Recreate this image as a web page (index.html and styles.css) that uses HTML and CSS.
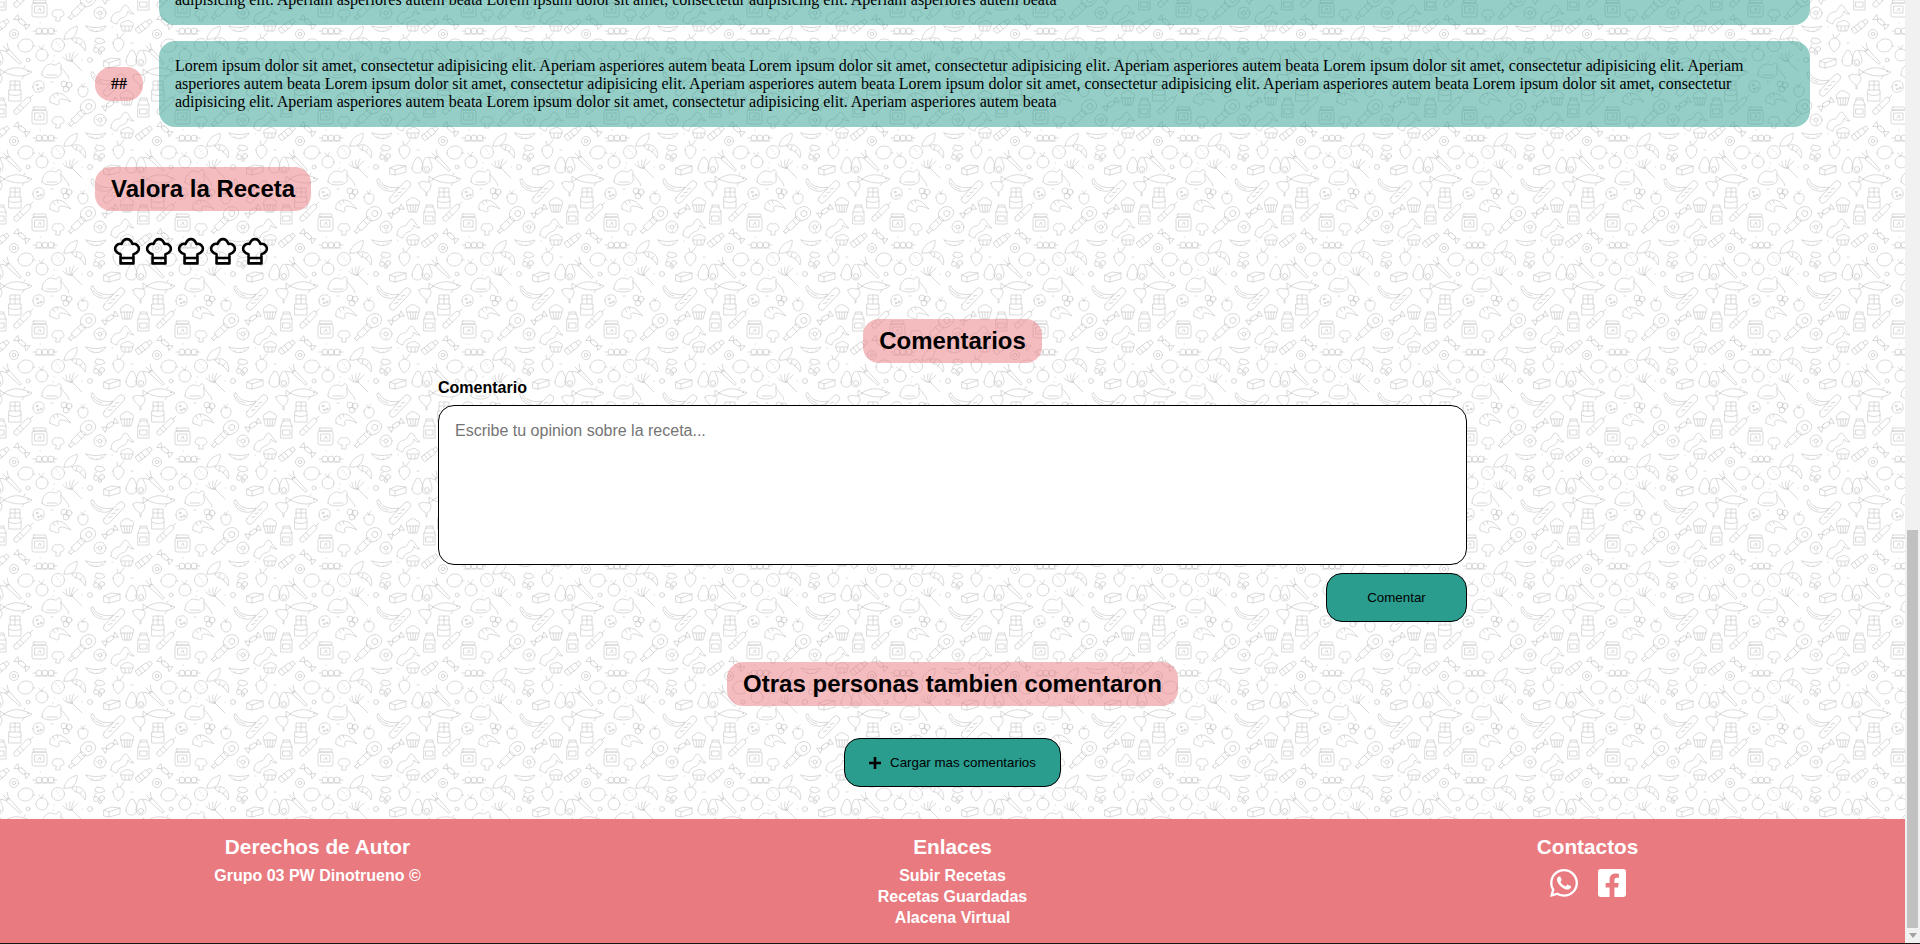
FILE: index.html
```html
<!DOCTYPE html>
<html lang="es">
<head>
    <meta charset="UTF-8">
    <meta name="viewport" content="width=device-width, initial-scale=1.0">
    <title>Receta</title>
    <link rel="stylesheet" href="styles.css">
</head>
<body>
    <div class="window">
        <div class="page">
            <main class="content">
                <section class="recipe">
                    <div class="steps">
                        <div class="step">
                            <span class="step-number">##</span>
                            <p class="step-text">Lorem ipsum dolor sit amet, consectetur adipisicing elit. Aperiam asperiores autem beata Lorem ipsum dolor sit amet, consectetur adipisicing elit. Aperiam asperiores autem beata Lorem ipsum dolor sit amet, consectetur adipisicing elit. Aperiam asperiores autem beata Lorem ipsum dolor sit amet, consectetur adipisicing elit. Aperiam asperiores autem beata Lorem ipsum dolor sit amet, consectetur adipisicing elit. Aperiam asperiores autem beata Lorem ipsum dolor sit amet, consectetur adipisicing elit. Aperiam asperiores autem beata Lorem ipsum dolor sit amet, consectetur adipisicing elit. Aperiam asperiores autem beata</p>
                        </div>
                        <div class="step">
                            <span class="step-number">##</span>
                            <p class="step-text">Lorem ipsum dolor sit amet, consectetur adipisicing elit. Aperiam asperiores autem beata Lorem ipsum dolor sit amet, consectetur adipisicing elit. Aperiam asperiores autem beata Lorem ipsum dolor sit amet, consectetur adipisicing elit. Aperiam asperiores autem beata Lorem ipsum dolor sit amet, consectetur adipisicing elit. Aperiam asperiores autem beata Lorem ipsum dolor sit amet, consectetur adipisicing elit. Aperiam asperiores autem beata Lorem ipsum dolor sit amet, consectetur adipisicing elit. Aperiam asperiores autem beata Lorem ipsum dolor sit amet, consectetur adipisicing elit. Aperiam asperiores autem beata</p>
                        </div>
                    </div>

                    <h2 class="pill rate-title">Valora la Receta</h2>
                    <div class="hats">
                        <svg class="hat" viewBox="0 0 26 26"><path d="M7 16C3 15 1.3 12 2.3 9.3 3.3 6.8 5.8 5.8 8 6.4 9 3.4 11 2 13 2s4 1.4 5 4.4c2.2-.6 4.7.4 5.7 2.900 1 2.7-.7 5.7-4.7 6.7v8.5H7zM7 19.500h12"/></svg>
                        <svg class="hat" viewBox="0 0 26 26"><path d="M7 16C3 15 1.3 12 2.3 9.3 3.3 6.8 5.8 5.8 8 6.4 9 3.4 11 2 13 2s4 1.4 5 4.4c2.2-.6 4.7.4 5.7 2.900 1 2.7-.7 5.7-4.7 6.7v8.5H7zM7 19.500h12"/></svg>
                        <svg class="hat" viewBox="0 0 26 26"><path d="M7 16C3 15 1.3 12 2.3 9.3 3.3 6.8 5.8 5.8 8 6.4 9 3.4 11 2 13 2s4 1.4 5 4.4c2.2-.6 4.7.4 5.7 2.900 1 2.7-.7 5.7-4.7 6.7v8.5H7zM7 19.500h12"/></svg>
                        <svg class="hat" viewBox="0 0 26 26"><path d="M7 16C3 15 1.3 12 2.3 9.3 3.3 6.8 5.8 5.8 8 6.4 9 3.4 11 2 13 2s4 1.4 5 4.4c2.2-.6 4.7.4 5.7 2.900 1 2.7-.7 5.7-4.7 6.7v8.5H7zM7 19.500h12"/></svg>
                        <svg class="hat" viewBox="0 0 26 26"><path d="M7 16C3 15 1.3 12 2.3 9.3 3.3 6.8 5.8 5.8 8 6.4 9 3.4 11 2 13 2s4 1.4 5 4.4c2.2-.6 4.7.4 5.7 2.900 1 2.7-.7 5.7-4.7 6.7v8.5H7zM7 19.500h12"/></svg>
                    </div>
                </section>

                <section class="comments">
                    <h2 class="pill">Comentarios</h2>
                    <form class="comment-form">
                        <label class="comment-label" for="comentario">Comentario</label>
                        <textarea class="comment-input" id="comentario" placeholder="Escribe tu opinion sobre la receta..."></textarea>
                        <button class="btn btn-send" type="button">Comentar</button>
                    </form>
                    <h2 class="pill others-title">Otras personas tambien comentaron</h2>
                    <button class="btn btn-more" type="button">
                        <svg class="plus" viewBox="0 0 12 12"><path d="M4.7 0h2.600v4.7H12v2.600H7.3V12H4.7V7.3H0V4.7h4.7z"/></svg>
                        Cargar mas comentarios
                    </button>
                </section>
            </main>

            <footer class="footer">
                <div class="footer-col">
                    <h3>Derechos de Autor</h3>
                    <a href="#">Grupo 03 PW Dinotrueno ©</a>
                </div>
                <div class="footer-col">
                    <h3>Enlaces</h3>
                    <a href="#">Subir Recetas</a>
                    <a href="#">Recetas Guardadas</a>
                    <a href="#">Alacena Virtual</a>
                </div>
                <div class="footer-col">
                    <h3>Contactos</h3>
                    <div class="socials">
                        <svg class="social" viewBox="0 32 448 448"><path d="M380.9 97.1C339 55.1 283.2 32 223.9 32c-122.4 0-222 99.6-222 222 0 39.1 10.2 77.3 29.6 111L0 480l117.7-30.9c32.4 17.7 68.9 27 106.1 27h.1c122.3 0 224.1-99.6 224.1-222 0-59.3-25.2-115-67.1-157zm-157 341.6c-33.2 0-65.7-8.9-94-25.7l-6.7-4-69.8 18.3L72 359.2l-4.4-7c-18.5-29.4-28.2-63.3-28.2-98.2 0-101.7 82.8-184.5 184.6-184.5 49.3 0 95.6 19.2 130.4 54.1 34.8 34.9 56.2 81.2 56.1 130.5 0 101.8-84.9 184.6-186.6 184.6zm101.2-138.2c-5.5-2.8-32.8-16.2-37.9-18-5.1-1.9-8.8-2.8-12.5 2.8-3.7 5.6-14.3 18-17.6 21.8-3.2 3.7-6.5 4.2-12 1.4-32.6-16.3-54-29.1-75.5-66-5.7-9.8 5.7-9.1 16.3-30.3 1.8-3.7.9-6.9-.5-9.7-1.4-2.8-12.5-30.1-17.1-41.2-4.5-10.8-9.1-9.3-12.5-9.5-3.2-.2-6.9-.2-10.6-.2-3.7 0-9.7 1.4-14.8 6.9-5.1 5.6-19.4 19-19.4 46.3 0 27.3 19.9 53.7 22.6 57.4 2.8 3.7 39.1 59.7 94.8 83.8 35.2 15.2 49 16.5 66.6 13.9 10.7-1.6 32.8-13.4 37.4-26.4 4.6-13 4.6-24.1 3.2-26.4-1.3-2.5-5-3.9-10.5-6.6z"/></svg>
                        <svg class="social" viewBox="0 32 448 448"><path d="M400 32H48A48 48 0 0 0 0 80v352a48 48 0 0 0 48 48h137.25V327.69h-63V256h63v-54.64c0-62.15 37-96.48 93.67-96.48 27.14 0 55.52 4.84 55.52 4.84v61h-31.27c-30.81 0-40.42 19.12-40.42 38.73V256h68.78l-11 71.69h-57.78V480H400a48 48 0 0 0 48-48V80a48 48 0 0 0-48-48z"/></svg>
                    </div>
                </div>
            </footer>
        </div>

        <div class="scrollbar">
            <span class="scroll-up"></span>
            <span class="scroll-thumb"></span>
            <span class="scroll-down"></span>
        </div>
    </div>
    <div class="edge"></div>
</body>
</html>
```

FILE: styles.css
```css
* {
    box-sizing: border-box;
}
html, body {
    height: 100%;
}
body {
    margin: 0;
    display: flex;
    flex-direction: column;
    overflow: hidden;
    font-family: "Liberation Sans", Arial, sans-serif;
    color: #000;
    background-color: #fff;
}
.window {
    display: flex;
    height: 943px;
}
.edge {
    height: 1px;
    background-color: #1c1414;
}
.page {
    flex: 1;
    display: flex;
    flex-direction: column;
    overflow: hidden;
}

/* food doodles, one 143x107 tile */
.content {
    flex: 1;
    background-color: #fff;
    background-position: 0 86px;
    background-size: 143px 107px;
    background-image: url("data:image/svg+xml,<svg xmlns='http://www.w3.org/2000/svg' xmlns:xlink='http://www.w3.org/1999/xlink' width='143' height='107' viewBox='0 0 143 107'><defs><g id='t' fill='none' stroke='rgb(198,198,198)' stroke-width='.65' stroke-linecap='round' stroke-linejoin='round'><g transform='translate(23 19) rotate(-45)'><rect x='-12' y='-2.5' width='22' height='5' rx='2.5'/><path d='M10 0h4M-6-2.5v5M-2-2.5v5'/></g><g transform='translate(39 30)'><rect x='-7' y='-6' width='15' height='14' rx='2'/><rect x='-6' y='-9' width='13' height='3' rx='1'/><rect x='-4' y='-3' width='9' height='7'/><path d='M-1 2l2-3 1 3'/></g><g transform='translate(76 33) rotate(-45)'><rect x='-4' y='-3' width='15' height='6' rx='1'/><path d='M-4-1.5h-5v3h5M5-3v6M-9-2v4'/></g><g transform='translate(59 37)'><path d='M-3 1c-4 0-5-3-3-5 0-2 3-3 5-2 2-1 5 0 5 2 2 2 1 5-3 5v4h-4z'/></g><g transform='translate(60 13)'><path d='M-10 3c-2-7 6-11 12-8 3 1 6 5 9 8-4-2-7-3-10-3-2 0-3 2-2 4 1 1-2 3-4 1-2-1-3 0-5-2zM-7-4l2 3M-3-6l1 3'/></g><g transform='translate(88 21) rotate(-30)'><path d='M-8 0c0-4 4-7 8-7 5 0 8 3 8 7 0 4-4 6-8 6-5 0-8-2-8-6z'/><circle cx='1' cy='0' r='3'/></g><g transform='translate(110 18) rotate(-35)'><rect x='-4' y='-2' width='8' height='4' rx='2'/><path d='M-4 0l-4-3v6zM4 0l4-3v6z'/></g><g transform='translate(127 10)'><path d='M-6 2h12l-2 7h-8zM-6 2c-2-3 0-5 2-5 0-3 7-3 8 0 3 0 3 3 2 5M-3 2l1 7M0 2v7M3 2l-1 7'/></g><g transform='translate(143 22)'><path d='M-5-3l2-5h7l2 5v12h-11zM-5-3h11M-3-8v-2h7v2M-3 1h7v5h-7z'/></g><g transform='translate(100 34)'><circle r='6'/><circle r='2'/><path d='M-4-1l1 1M3-3l1 1M0 4h1'/></g><path d='M111 42c0-7 5-9 8-9 3-1 3-6 6-7 3 0 3 3 5 5 1 2 3 3 4 4-3 0-5-1-6-3-1 4-2 6-6 7-3 1-5 4-5 6-2 0-5-2-6-3z'/><g transform='translate(22 43) rotate(40)'><rect x='-4' y='-2' width='8' height='4' rx='2'/><path d='M-4 0l-4-3v6zM4 0l4-3v6z'/></g><g transform='translate(144 47) rotate(-38)'><rect x='-9' y='-3' width='14' height='6' rx='1'/><path d='M5-2h4v4h-4M-5-3v6M-1-3v6'/></g><g transform='translate(45 52)'><circle cx='-6' r='3'/><circle r='3'/><circle cx='6' r='3'/><path d='M-12 0h3M9 0h3M-10 3h20'/></g><path d='M64 60c0-3 2-6 5-9 3-2 6-3 8-4 1 3-1 7-2 9-2 3-7 5-11 4z'/><g transform='translate(96 50)'><path d='M-10-3c3 7 16 8 20 0-6 2-14 2-20 0zM-4 1h.5M1 2h.5M5 0h.5'/></g><g transform='translate(127 47)'><path d='M-6 0h12l-2 5h-8zM-6 0c-1-4 2-4 3-4 2-2 6-2 7 0 2 0 3 2 2 4M-2 1v4M2 1v4'/></g><circle cx='14' cy='55' r='4.5'/><circle cx='14' cy='55' r='1.8'/><g transform='translate(10 74) rotate(45)'><path d='M-3-2l18 1v2l-18 1c-2 0-2-4 0-4zM-3-1l-6-4M-3 0h-7M-3 1l-6 4'/></g><path d='M18 67c0-4 4-7 8-7 5 0 8 3 7 7-1 4-4 6-8 6-3 0-7-2-7-6zM33 67h2'/><circle cx='42' cy='76' r='6'/><path d='M42 70c0-2 1-3 2-4M42 70c-2-1-3-2-3-3'/><circle cx='58' cy='66' r='6.5'/><path d='M56 63h.5M60 68h.5M58 65h.5'/><path d='M72 60c4-3 11-1 13 5 1 3 1 5 0 7-1-2-2-4-4-5-1-2-3-3-5-3-2-1-3-2-4-4zM77 60l-1 4M82 63l-2 3'/><g transform='translate(100 66)'><path d='M-3-7l6 1 2 3-5 2-5-2zM-3-1c-2 0-3 2-2 4'/><circle cx='-4' cy='5' r='2.5'/><circle cx='2' cy='4' r='2.5'/><circle cx='0' cy='8' r='1.5'/></g><path d='M113 64c0-3 2-4 6-5 3 1 5 3 5 5 0 4-3 7-6 9-2-2-5-5-5-9zM120 59l4-5M118 59l-1-4'/><g transform='translate(72 82)'><path d='M0 0l10 10M0 0c-4 1-6-2-6-7M0 0c-2 0-3-3-2-8M0 0c-1-2 0-5 2-9M0 0c0-2 3-4 6-7M0 0c-3 0-6 0-9-4'/></g><path d='M104 82l7-3 9 1v6l-11 3-5-1zM104 82l5 2 11-4M109 84v5'/><g transform='translate(135 80)'><path d='M-9 2c0-4 3-7 4-10 1-1 3-1 4 0 1 3 3 5 3 9 0 3-2 6-5 6-4 0-6-2-6-5z'/><path d='M1 2c0-4 2-8 3-10 2-1 3-1 4 0 1 3 3 6 3 9 0 4-3 6-5 6-3 0-5-2-5-5z'/><circle cx='6' cy='3' r='2.5'/></g><g transform='translate(18 93)'><path d='M-14 0c4-3 10-5 16-4 4 1 8 2 12 4-4 3-8 4-12 4-6 0-12-2-16-4zM-14 0l-4-3v6zM6-4l1-2M6 4l-2 3'/><circle cx='10' cy='-.5' r='.5'/></g><g transform='translate(53 92)'><path d='M-11 4c0-7 5-11 9-11 3 0 5 3 7-1 1-1 4 1 3 3-1 3 1 5 0 8-1 3-6 4-10 4-4 0-8-1-9-3zM-6 4h10M8-4l7 9 1 3'/></g><path d='M91 94c0 5 4 10 11 11 5 1 9-1 11-4-4 1-8 1-13-1-3-1-6-4-7-7zM93 97c2 3 5 5 9 6'/><g transform='translate(114 106) rotate(-47)'><rect x='-14' y='-3.5' width='28' height='7' rx='3.5'/><path d='M-7-1l3 2M-2-1l3 2M3-1l3 2'/></g><path d='M133 97c2-2 5-2 7-1 3-1 5 1 5 3 0 3-2 6-4 7v4h-1v-4c-3-2-7-5-7-9z'/><g transform='translate(15 4)'><rect x='-6' y='0' width='12' height='11'/><path d='M-5 0v-9h10v9M0-9v9M-5-5h10M-6 4c3 2 9 2 12 0'/></g><g transform='translate(39 1)'><path d='M-6 0c0-4 2-6 5-6 3-1 6 1 6 5 1 3-2 6-5 6-4 1-6-2-6-5z'/><circle cx='-2' cy='-2' r='1'/><circle cx='2' cy='1' r='1'/><circle cx='-1' cy='2' r='.8'/></g><g transform='translate(66 1)'><circle cx='-2' cy='-3' r='3'/><circle cx='3' cy='-2' r='3'/><circle cx='0' cy='2' r='3'/></g><g transform='translate(83 5)'><path d='M-5-1c0-3 3-4 5-3 2-1 5 0 5 3 0 4-2 7-5 7-3 0-5-3-5-7zM0-4c0-2 1-3 2-4M0-4l-2-3'/></g><path d='M40 44h.5M54 50h.5M112 48h.5M54 77h.5M53 82h.5M82 81h.5M51 103h2M131 64h2'/><circle cx='28' cy='81' r='2'/><circle cx='90' cy='81' r='2.5'/></g></defs><use xlink:href='%23t'/><use xlink:href='%23t' y='107'/><use xlink:href='%23t' y='-107'/><use xlink:href='%23t' x='143'/><use xlink:href='%23t' x='-143'/></svg>");
}

/* receta */
.recipe {
    padding: 0 95px;
}
.steps {
    display: flex;
    flex-direction: column;
    gap: 16px;
    margin-top: -61px;
}
.step {
    display: flex;
    align-items: center;
    gap: 16px;
}
.step-number {
    padding: 8px 16px;
    border-radius: 16px;
    font-family: "Liberation Serif", "Times New Roman", serif;
    font-size: 16px;
    line-height: 18px;
    font-weight: bold;
    background-color: rgba(233, 122, 128, 0.5);
}
.step-text {
    flex: 1;
    margin: 0;
    padding: 16px;
    border-radius: 16px;
    font-family: "Liberation Serif", "Times New Roman", serif;
    font-size: 16px;
    line-height: 18px;
    background-color: rgba(42, 157, 143, 0.5);
}
.pill {
    width: fit-content;
    margin: 0;
    padding: 8px 16px;
    border-radius: 16px;
    font-size: 24px;
    line-height: 28px;
    font-weight: bold;
    background-color: rgba(233, 122, 128, 0.5);
}
.rate-title {
    margin-top: 40px;
}
.hats {
    display: flex;
    gap: 4px;
    margin-top: 26px;
    padding-left: 18px;
}
.hat {
    width: 28px;
    height: 28px;
    fill: none;
    stroke: #000;
    stroke-width: 2.4;
    stroke-linejoin: round;
}

/* comentarios */
.comments {
    display: flex;
    flex-direction: column;
    align-items: center;
    margin-top: 54px;
    padding-bottom: 32px;
}
.comment-form {
    display: flex;
    flex-direction: column;
    width: 1029px;
    margin-top: 16px;
}
.comment-label {
    font-size: 16px;
    line-height: 18px;
    font-weight: bold;
    margin-bottom: 8px;
}
.comment-input {
    display: block;
    width: 100%;
    height: 160px;
    padding: 16px;
    border: 1px solid #000;
    border-radius: 16px;
    outline: none;
    resize: none;
    font-family: "Liberation Sans", Arial, sans-serif;
    font-size: 16px;
    background-color: #fff;
}
.comment-input::placeholder {
    color: #757575;
}
.btn {
    display: flex;
    align-items: center;
    justify-content: center;
    border: 1px solid #000;
    border-radius: 16px;
    font-family: "Liberation Sans", Arial, sans-serif;
    font-size: 13.333px;
    color: #000;
    background-color: #2a9d8f;
    cursor: pointer;
}
.btn-send {
    align-self: flex-end;
    width: 141px;
    height: 49px;
    margin-top: 8px;
}
.others-title {
    margin-top: 40px;
}
.btn-more {
    gap: 9px;
    width: 217px;
    height: 49px;
    margin-top: 32px;
}
.plus {
    width: 12px;
    height: 12px;
    fill: #000;
}

/* footer */
.footer {
    display: grid;
    grid-template-columns: repeat(3, 1fr);
    height: 124px;
    padding-top: 16px;
    color: #fff;
    background-color: #e97a80;
}
.footer-col {
    display: flex;
    flex-direction: column;
    align-items: center;
    text-align: center;
}
.footer-col h3 {
    margin: 0 0 6px;
    font-size: 20.8px;
    line-height: 24px;
}
.footer-col a {
    font-size: 16px;
    line-height: 21px;
    font-weight: bold;
    color: #fff;
    text-decoration: none;
}
.socials {
    display: flex;
    gap: 20px;
    margin-top: 4px;
}
.social {
    width: 28px;
    height: 28px;
    fill: #fff;
}

/* the browser's scrollbar, page scrolled to the end */
.scrollbar {
    display: flex;
    flex-direction: column;
    align-items: center;
    width: 15px;
    background-color: #f1f1f1;
}
.scroll-up {
    height: 530px;
}
.scroll-thumb {
    width: 11px;
    height: 398px;
    background-color: #c1c1c1;
}
.scroll-down {
    width: 0;
    height: 0;
    margin-top: 5px;
    border-style: solid;
    border-width: 5px 4px 0;
    border-color: #a3a3a3 transparent transparent;
}
```
